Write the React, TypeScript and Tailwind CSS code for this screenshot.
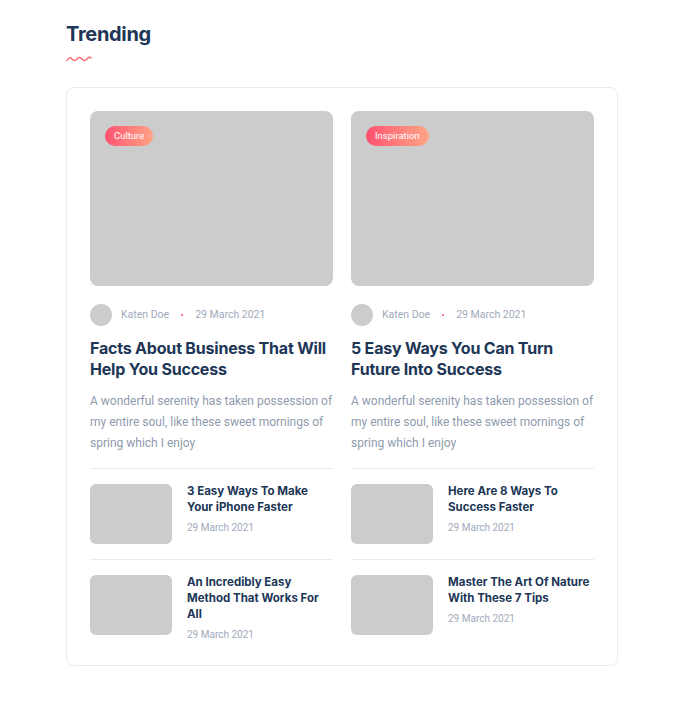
const mainPosts = [
  {
    tag: 'Culture',
    title: 'Facts About Business That Will Help You Success',
  },
  {
    tag: 'Inspiration',
    title: '5 Easy Ways You Can Turn Future Into Success',
  },
]

const smallPosts = [
  [
    { title: '3 Easy Ways To Make Your iPhone Faster' },
    { title: 'An Incredibly Easy Method That Works For All' },
  ],
  [
    { title: 'Here Are 8 Ways To Success Faster' },
    { title: 'Master The Art Of Nature With These 7 Tips' },
  ],
]

const heading = "font-['Inter',sans-serif]"
const body = "font-['Roboto',sans-serif]"

function Wave() {
  return (
    <svg width="26" height="8" viewBox="0 0 26 8" fill="none">
      <path
        d="M1 5.5 Q3.5 1 6 4 T11 4 T16 4 T21 4 T25 3"
        stroke="#fe6b77"
        strokeWidth="1.5"
        strokeLinecap="round"
        fill="none"
      />
    </svg>
  )
}

export default function App() {
  return (
    <div className="min-h-[707px] bg-white px-[66px] pt-[22px]">
      <h2 className={`${heading} text-[20px] font-bold text-[#203656] leading-[24px] tracking-[-0.3px]`}>
        Trending
      </h2>
      <div className="mt-[9px]">
        <Wave />
      </div>

      <div className="mt-[24px] w-[552px] rounded-[8px] border border-[#ebebeb] px-[23px] pt-[23px] pb-[23px]">
        <div className="grid grid-cols-2 gap-x-[18px]">
          {mainPosts.map((post, i) => (
            <div key={post.title}>
              {/* Featured */}
              <div className="relative h-[175px] rounded-[8px] bg-[#cccccc]">
                <span
                  className={`${body} absolute left-[15px] top-[15px] rounded-full bg-gradient-to-r from-[#fe4f70] to-[#ffa387] px-[9px] py-[3px] text-[9.5px] leading-[14px] text-white`}
                >
                  {post.tag}
                </span>
              </div>

              <div className={`${body} mt-[18px] flex items-center text-[10.5px] text-[#9faabb]`}>
                <span className="h-[22px] w-[22px] rounded-full bg-[#cccccc]"></span>
                <span className="ml-[9px]">Katen Doe</span>
                <span className="mx-[12px] h-[2px] w-[2px] rounded-full bg-[#fe4f70]"></span>
                <span>29 March 2021</span>
              </div>

              <h3 className={`${heading} mt-[12px] text-[16px] font-bold leading-[21px] text-[#203656] tracking-[-0.2px]`}>
                {post.title}
              </h3>

              <p className={`${body} mt-[11px] text-[12px] leading-[21px] text-[#8f9bad]`}>
                A wonderful serenity has taken possession of my entire soul, like these sweet mornings of spring which I
                enjoy
              </p>

              <div className="mt-[14px]">
                {smallPosts[i].map((s) => (
                  <div key={s.title} className="flex border-t border-[#ebebeb] pt-[15px] pb-[15px] last:pb-0">
                    <div className="h-[60px] w-[82px] shrink-0 rounded-[6px] bg-[#cccccc]"></div>
                    <div className="ml-[15px] -mt-[1px]">
                      <h4 className={`${heading} text-[11.5px] font-bold leading-[16px] text-[#203656]`}>
                        {s.title}
                      </h4>
                      <div className={`${body} mt-[5px] text-[10px] text-[#9faabb]`}>29 March 2021</div>
                    </div>
                  </div>
                ))}
              </div>
            </div>
          ))}
        </div>
      </div>
    </div>
  )
}
